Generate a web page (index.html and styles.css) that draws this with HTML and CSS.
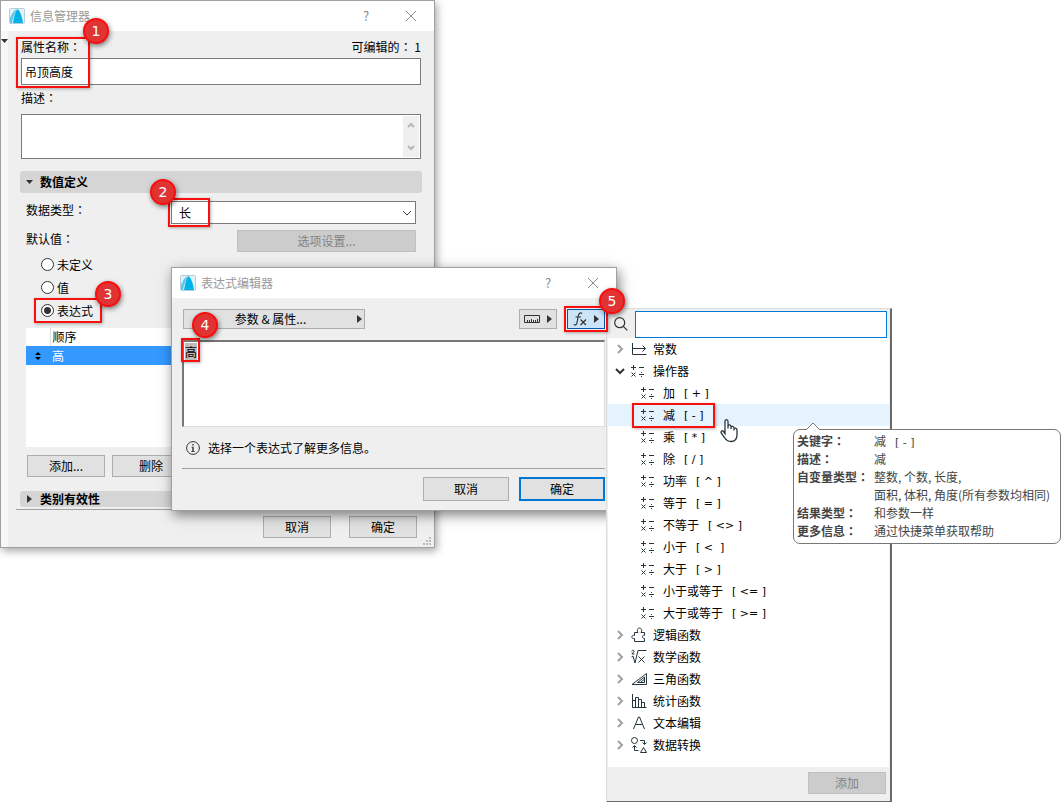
FILE: index.html
```html
<!DOCTYPE html>
<html lang="zh-CN">
<head>
    <meta charset="UTF-8">
    <meta name="viewport" content="width=device-width, initial-scale=1.0">
    <title>信息管理器</title>
    <link rel="stylesheet" href="styles.css">
</head>
<body>
    <!-- shared icons -->
    <svg class="defs" width="0" height="0" aria-hidden="true">
        <symbol id="logo" viewBox="0 0 16 16">
            <rect x="0.5" y="0.5" width="15" height="15" rx="1" fill="#e4f1f7" stroke="#b5cdd8"/>
            <path d="M1 15V10C3 5 5 2 8 1C6 5 4 9 3 15Z" fill="#5cc8ee"/>
            <path d="M4 15C5 9 6 4 8.500 1C11 3 13 8 14 15H10Z" fill="#00b2e8"/>
        </symbol>
        <symbol id="close" viewBox="0 0 12 12">
            <path d="M1 1L11 11M11 1L1 11" fill="none" stroke="#888"/>
        </symbol>
        <symbol id="ops" viewBox="0 0 14 14">
            <path d="M0 3.500H5M2.500 1V6M8 3.500H13M0.500 8.500L4.500 12.500M4.500 8.500L0.500 12.500M8 10.500H13" fill="none" stroke="#26343c"/>
            <path d="M10 8h1v1h-1zM10 12h1v1h-1z" fill="#26343c"/>
        </symbol>
        <symbol id="right" viewBox="0 0 8 10">
            <path d="M2 1L6 5L2 9" fill="none" stroke="#a0a0a0" stroke-width="2"/>
        </symbol>
        <symbol id="play" viewBox="0 0 5 8">
            <path d="M0 0L5 4L0 8Z" fill="#333"/>
        </symbol>
    </svg>

    <main class="desktop">
        <section class="window manager">
            <header class="titlebar">
                <svg class="logo"><use href="#logo"/></svg>
                <h1>信息管理器</h1>
                <button class="help" aria-label="帮助">?</button>
                <button class="close" aria-label="关闭"><svg><use href="#close"/></svg></button>
            </header>
            <div class="manager-body">
                <svg class="collapse" viewBox="0 0 7 4"><path d="M0 0H7L3.500 4Z" fill="#333"/></svg>
                <div class="label-row">
                    <label for="name">属性名称<span class="colon">：</span></label>
                    <span>可编辑的<span class="colon">：</span> 1</span>
                </div>
                <input id="name" class="name" type="text" value="吊顶高度">
                <label class="desc-label" for="desc">描述<span class="colon">：</span></label>
                <div class="desc">
                    <textarea id="desc"></textarea>
                    <div class="scroll">
                        <svg viewBox="0 0 8 6"><path d="M1 5L4 2L7 5" /></svg>
                        <svg viewBox="0 0 8 6"><path d="M1 1L4 4L7 1" /></svg>
                    </div>
                </div>

                <h2 class="section"><svg viewBox="0 0 7 4" class="down"><path d="M0 0H7L3.500 4Z" fill="#333"/></svg>数值定义</h2>
                <div class="field">
                    <label for="type">数据类型<span class="colon">：</span></label>
                    <div class="select">
                        <select id="type"><option>长</option></select>
                        <svg viewBox="0 0 10 6"><path d="M1 1L5 5L9 1" fill="none" stroke="#444"/></svg>
                    </div>
                </div>
                <div class="field default">
                    <span>默认值<span class="colon">：</span></span>
                    <button class="btn" disabled>选项设置...</button>
                </div>
                <div class="radios">
                    <label><input type="radio" name="def">未定义</label>
                    <label><input type="radio" name="def">值</label>
                    <label><input type="radio" name="def" checked>表达式</label>
                </div>
                <div class="list">
                    <table>
                        <thead>
                            <tr><th class="handle"></th><th>顺序</th></tr>
                        </thead>
                        <tbody>
                            <tr><td class="handle"><svg viewBox="0 0 6 8"><path d="M0 3L3 0L6 3ZM0 5L3 8L6 5Z"/></svg></td><td>高</td></tr>
                        </tbody>
                    </table>
                </div>
                <div class="list-buttons">
                    <button class="btn">添加...</button>
                    <button class="btn">删除</button>
                </div>
                <h2 class="section cut"><svg class="play"><use href="#play"/></svg>类别有效性</h2>
                <div class="manager-footer">
                    <button class="btn">取消</button>
                    <button class="btn">确定</button>
                    <svg class="grip" viewBox="0 0 8 8"><path d="M6 0h2v2H6zM3 3h2v2H3zM6 3h2v2H6zM0 6h2v2H0zM3 6h2v2H3zM6 6h2v2H6z" fill="#bbb"/></svg>
                </div>
            </div>
        </section>

        <section class="window editor">
            <header class="titlebar">
                <svg class="logo"><use href="#logo"/></svg>
                <h1>表达式编辑器</h1>
                <button class="help" aria-label="帮助">?</button>
                <button class="close" aria-label="关闭"><svg><use href="#close"/></svg></button>
            </header>
            <div class="editor-body">
                <div class="toolbar">
                    <button class="btn params"><span>参数 &amp; 属性...</span><svg class="play"><use href="#play"/></svg></button>
                    <button class="btn tool" aria-label="单位">
                        <svg class="ruler" viewBox="0 0 16 8"><path d="M0.500 0.500H15.500V7.500H0.500ZM3.500 5V7M5.500 5V7M7.500 4V7M9.500 5V7M11.500 5V7M13.500 4V7" fill="none" stroke="#333"/></svg>
                        <svg class="play"><use href="#play"/></svg>
                    </button>
                    <button class="btn tool active" aria-label="函数">
                        <svg class="fx" viewBox="0 0 14 14"><path d="M9 1.500C7 0 5.800 1.500 5.300 4L4 10.500C3.600 12.800 2.500 13.500 0.800 12.500M2.500 5H8M7.500 7.500L13 13M13 7.500L7.500 13" fill="none" stroke="#333" stroke-width="1.200"/></svg>
                        <svg class="play"><use href="#play"/></svg>
                    </button>
                </div>
                <textarea class="expression" aria-label="表达式">高</textarea>
                <p class="info">
                    <svg viewBox="0 0 14 14"><circle cx="7" cy="7" r="6.400" fill="none" stroke="#333"/><path d="M6.300 3h1.400v1.400H6.300zM5.500 5.700h2.200v4.500h1v0.800H5.300v-0.800h1V6.500h-0.800z" fill="#333"/></svg>
                    选择一个表达式了解更多信息。
                </p>
                <div class="editor-footer">
                    <button class="btn">取消</button>
                    <button class="btn primary">确定</button>
                </div>
            </div>
        </section>

        <section class="functions">
            <div class="search">
                <svg viewBox="0 0 14 14"><circle cx="5.700" cy="5.700" r="5" /><path d="M9.300 9.300L13.300 13.300"/></svg>
                <input type="text" aria-label="搜索">
            </div>
            <ul class="tree">
                <li><div class="node"><svg class="arrow"><use href="#right"/></svg><svg class="icon" viewBox="0 0 16 16"><path d="M1.500 2V13.500H15.500M1.500 7.500H14.500M11.500 4.500L14.500 7.500L11.500 10.500"/></svg>常数</div></li>
                <li>
                    <div class="node"><svg class="arrow open" viewBox="0 0 10 8"><path d="M1 2L5 6L9 2"/></svg><svg class="ops"><use href="#ops"/></svg>操作器</div>
                    <ul>
                        <li class="leaf"><svg class="ops"><use href="#ops"/></svg>加<span class="sign">[ + ]</span></li>
                        <li class="leaf hover"><svg class="ops"><use href="#ops"/></svg>减<span class="sign">[ - ]</span></li>
                        <li class="leaf"><svg class="ops"><use href="#ops"/></svg>乘<span class="sign">[ * ]</span></li>
                        <li class="leaf"><svg class="ops"><use href="#ops"/></svg>除<span class="sign">[ / ]</span></li>
                        <li class="leaf"><svg class="ops"><use href="#ops"/></svg>功率<span class="sign">[ ^ ]</span></li>
                        <li class="leaf"><svg class="ops"><use href="#ops"/></svg>等于<span class="sign">[ = ]</span></li>
                        <li class="leaf"><svg class="ops"><use href="#ops"/></svg>不等于<span class="sign">[ &lt;&gt; ]</span></li>
                        <li class="leaf"><svg class="ops"><use href="#ops"/></svg>小于<span class="sign">[ &lt;&nbsp; ]</span></li>
                        <li class="leaf"><svg class="ops"><use href="#ops"/></svg>大于<span class="sign">[ &gt; ]</span></li>
                        <li class="leaf"><svg class="ops"><use href="#ops"/></svg>小于或等于<span class="sign">[ &lt;= ]</span></li>
                        <li class="leaf"><svg class="ops"><use href="#ops"/></svg>大于或等于<span class="sign">[ &gt;= ]</span></li>
                    </ul>
                </li>
                <li><div class="node"><svg class="arrow"><use href="#right"/></svg><svg class="icon" viewBox="0 0 16 16"><path d="M3.500 14.500V11.500C0 12.500 0 7.500 3.500 8.500V5.500H7C5.500 3.500 6.500 1 8.500 1S11.500 3.500 10 5.500H13.500V8.500C11 7.500 10.500 11.500 13.500 11.500V14.500Z"/></svg>逻辑函数</div></li>
                <li><div class="node"><svg class="arrow"><use href="#right"/></svg><svg class="icon" viewBox="0 0 16 16"><path d="M0.500 8L2 7L4 14L7 1.500H15.500M7.500 7.500L13.500 13.500M13.500 7.500L7.500 13.500M0.800 2.500C1 0.500 3.500 1 3 2.800L0.800 5H3.500"/></svg>数学函数</div></li>
                <li><div class="node"><svg class="arrow"><use href="#right"/></svg><svg class="icon" viewBox="0 0 16 16"><path d="M1 13.500L15.500 2.500V13.500ZM6.500 11.500L13.500 6V11.500Z M10 11L13 8.500"/></svg>三角函数</div></li>
                <li><div class="node"><svg class="arrow"><use href="#right"/></svg><svg class="icon" viewBox="0 0 16 16"><path d="M1.500 1V14.500H15.500M4.500 14V4.500H7.500V14M7.500 6.500H10.500V14M10.500 9.500H13.500V14M1.500 7.500H4.500"/></svg>统计函数</div></li>
                <li><div class="node"><svg class="arrow"><use href="#right"/></svg><svg class="icon" viewBox="0 0 16 16"><path d="M2.500 14L7.500 2H8.500L13.500 14M4.500 9.500H11.500"/></svg>文本编辑</div></li>
                <li><div class="node"><svg class="arrow"><use href="#right"/></svg><svg class="icon" viewBox="0 0 16 16"><circle cx="3.500" cy="3.500" r="3"/><path d="M9 3.500H13.500V7.500M11.500 5.500L13.500 7.500L15.500 5.500M7.500 13.500H3.500V9M1.500 10.500L3.500 8.500L5.500 10.500M12.500 10.500L15.500 15.500H9.500Z"/></svg>数据转换</div></li>
            </ul>
            <div class="functions-footer">
                <button class="btn" disabled>添加</button>
            </div>
        </section>

        <div class="tooltip" role="tooltip">
            <svg class="tail" viewBox="0 0 14 8"><path d="M0 8L7 1L14 8" fill="#fff" stroke="#777"/></svg>
            <dl>
                <dt>关键字<span class="colon">：</span></dt><dd>减<span class="sign">[ - ]</span></dd>
                <dt>描述<span class="colon">：</span></dt><dd>减</dd>
                <dt>自变量类型<span class="colon">：</span></dt><dd>整数, 个数, 长度,<br>面积, 体积, 角度(所有参数均相同)</dd>
                <dt>结果类型<span class="colon">：</span></dt><dd>和参数一样</dd>
                <dt>更多信息<span class="colon">：</span></dt><dd>通过快捷菜单获取帮助</dd>
            </dl>
        </div>
        <svg class="cursor" viewBox="0 0 18 24"><path d="M5 15V3C5 0.500 8 0.500 8 3V10V7.500C8 6 11 6 11 8V10.500V9C11 7.500 14 7.500 14 9.500V12V10.500C14 9 17 9.500 17 11.500V16C17 20 15 23 11 23C7.500 23 6 21.500 4.500 19L1.200 14.500C0.500 12.500 2.500 11.500 3.500 13Z" fill="#fff" stroke="#26343c" stroke-width="1.300"/></svg>

        <!-- step marks -->
        <div class="frame frame-name"></div>
        <div class="frame frame-type"></div>
        <div class="frame frame-radio"></div>
        <div class="frame frame-expression"></div>
        <div class="frame frame-fx"></div>
        <div class="frame frame-minus"></div>
        <span class="badge badge-1">1</span>
        <span class="badge badge-2">2</span>
        <span class="badge badge-3">3</span>
        <span class="badge badge-4">4</span>
        <span class="badge badge-5">5</span>
    </main>
</body>
</html>
```
FILE: styles.css
```css
* {
    box-sizing: border-box;
}
body {
    margin: 0;
    background: #fff;
    color: #000;
    font-family: "Noto Sans CJK SC", sans-serif;
    font-size: 12px;
    line-height: 18px;
}
input, select, textarea, button {
    font: inherit;
    color: inherit;
    border-radius: 0;
    outline: none;
}
h1, h2, p, ul, dl, dd {
    margin: 0;
    padding: 0;
}
ul {
    list-style: none;
}
svg {
    display: block;
    flex: none;
}
.defs {
    position: absolute;
}
.desktop {
    position: relative;
    min-height: 100vh;
}
/* centred full-width colon */
.colon {
    font-family: "Noto Sans CJK TC", sans-serif;
    font-feature-settings: "locl" 0;
}

/* windows */
.window {
    position: absolute;
    background: #efefef;
    border: 1px solid #a0a0a0;
    box-shadow: 2px 3px 8px rgba(0, 0, 0, 0.35);
}
.manager {
    left: 0;
    top: 0;
    width: 435px;
}
.editor {
    left: 171px;
    top: 267px;
    width: 446px;
    box-shadow: 2px 4px 12px rgba(0, 0, 0, 0.5);
}
.titlebar {
    display: flex;
    align-items: center;
    height: 30px;
    padding: 0 17px 0 8px;
    background: #fff;
}
.titlebar h1 {
    flex: 1;
    margin-left: 5px;
    font-size: 12px;
    font-weight: normal;
    color: #999;
}
.titlebar button {
    padding: 0;
    border: 0;
    background: none;
    color: #888;
}
.logo {
    width: 16px;
    height: 16px;
}
.help {
    width: 12px;
    margin-right: 33px;
    font-size: 13px;
}
.close svg {
    width: 12px;
    height: 12px;
}
.btn {
    display: flex;
    align-items: center;
    justify-content: center;
    height: 22px;
    padding: 0 0 1px;
    background: #e1e1e1;
    border: 1px solid #adadad;
}
.btn:disabled {
    background: #ccc;
    border-color: #bfbfbf;
    color: #838383;
}
.play {
    width: 5px;
    height: 8px;
}

/* property manager */
.manager-body {
    padding: 7px 13px 0 20px;
    background: linear-gradient(to right, #f7f7f7 7px, #efefef 7px);
    position: relative;
}
.collapse {
    position: absolute;
    left: 0;
    top: 8px;
    width: 7px;
    height: 4px;
}
.label-row {
    display: flex;
    justify-content: space-between;
    height: 20px;
}
.name {
    display: block;
    width: 100%;
    height: 27px;
    padding: 0 3px;
    border: 1px solid #7a7a7a;
    background: #fff;
}
.desc-label {
    display: block;
    padding: 4px 0 7px;
}
.desc {
    display: flex;
    height: 45px;
    padding: 1px;
    border: 1px solid #7a7a7a;
    background: #fff;
}
.desc textarea {
    flex: 1;
    border: 0;
    resize: none;
}
.scroll {
    display: flex;
    flex-direction: column;
    justify-content: space-between;
    align-items: center;
    width: 16px;
    padding: 6px 0;
    background: #efefef;
}
.scroll svg {
    width: 8px;
    height: 6px;
    fill: none;
    stroke: #b5b5b5;
    stroke-width: 2;
}
.section {
    display: flex;
    align-items: center;
    height: 22px;
    margin: 12px -1px 8px;
    padding-left: 6px;
    background: #d5d5d5;
    border-radius: 3px;
    font-size: 12px;
    font-weight: bold;
}
.section .down {
    width: 7px;
    height: 4px;
    margin-right: 7px;
}
.section .play {
    margin: 0 8px 0 1px;
}
.field {
    display: flex;
    justify-content: space-between;
    padding: 0 5px;
}
.select {
    position: relative;
    width: 245px;
    height: 23px;
}
.select select {
    width: 100%;
    height: 100%;
    padding: 0 7px;
    border: 1px solid #7a7a7a;
    background: #fff;
    appearance: none;
}
.select svg {
    position: absolute;
    right: 4px;
    top: 9px;
    width: 10px;
    height: 6px;
}
.default {
    margin-top: 6px;
}
.default .btn {
    width: 179px;
}
.radios {
    padding-left: 20px;
    margin: 1px 0 6px;
}
.radios label {
    display: flex;
    align-items: center;
    gap: 3px;
    height: 23px;
}
.radios input {
    appearance: none;
    width: 13px;
    height: 13px;
    margin: 0;
    border: 1px solid #333;
    border-radius: 50%;
    background: #fff;
}
.radios input:checked {
    background: radial-gradient(circle, #333 3px, #fff 4px);
}
.list {
    height: 119px;
    margin: 0 5px;
    background: #fff;
}
.list table {
    width: 100%;
    border-collapse: collapse;
}
.list th, .list td {
    height: 18px;
    padding: 0 2px;
    line-height: 18px;
    font-weight: normal;
    text-align: left;
}
.list td {
    height: 19px;
}
.list .handle {
    width: 24px;
}
.list th.handle {
    border-right: 1px solid #ddd;
}
.list .handle svg {
    width: 6px;
    height: 8px;
    margin: auto;
}
.list tbody {
    background: #3399ff;
    color: #fff;
}
.list-buttons {
    display: flex;
    gap: 7px;
    margin: 8px 6px 14px;
}
.list-buttons .btn {
    width: 78px;
}
.section.cut {
    height: 16px;
    margin: 0 -1px 2px;
}
.manager-footer {
    position: relative;
    display: flex;
    justify-content: flex-end;
    gap: 18px;
    margin: 0 0 0 -5px;
    padding: 6px 4px 9px;
    border-top: 1px solid #a0a0a0;
}
.manager-footer .btn {
    width: 68px;
}
.grip {
    position: absolute;
    right: -10px;
    bottom: 2px;
    width: 8px;
    height: 8px;
}

/* expression editor */
.editor-body {
    padding: 11px 11px 9px 10px;
}
.toolbar {
    display: flex;
    gap: 10px;
    margin-left: 1px;
}
.toolbar .btn {
    height: 20px;
}
.params {
    width: 182px;
    margin-right: auto;
    padding-right: 2px;
}
.params span {
    flex: 1;
}
.tool {
    width: 38px;
    gap: 7px;
}
.tool.active {
    background: #cce4f7;
    border-color: #0058a8;
}
.ruler {
    width: 16px;
    height: 8px;
}
.fx {
    width: 14px;
    height: 14px;
}
.expression {
    display: block;
    width: 100%;
    height: 87px;
    margin-top: 11px;
    padding: 1px;
    border: 1px solid #ddd;
    border-top: 2px solid #777;
    border-left: 2px solid #777;
    background: linear-gradient(#bbb, #bbb) no-repeat 1px 1px / 12px 17px #fff;
    resize: none;
}
.info {
    display: flex;
    align-items: center;
    gap: 8px;
    height: 41px;
    padding-left: 4px;
}
.info svg {
    width: 14px;
    height: 14px;
}
.editor-footer {
    display: flex;
    justify-content: flex-end;
    gap: 10px;
    padding-top: 8px;
    border-top: 1px solid #a0a0a0;
}
.editor-footer .btn {
    width: 86px;
    height: 24px;
}
.editor-footer .primary {
    border: 2px solid #0078d7;
}

/* function list */
.functions {
    position: absolute;
    left: 606px;
    top: 308px;
    width: 286px;
    padding: 1px;
    background: #efefef;
    border: 1px solid #ddd;
    border-right: 2px solid #696969;
    border-bottom: 2px solid #696969;
}
.search {
    display: flex;
    align-items: center;
    gap: 7px;
    height: 28px;
    padding: 0 2px 0 6px;
}
.search svg {
    width: 14px;
    height: 14px;
    fill: none;
    stroke: #333;
    stroke-width: 1.2;
}
.search input {
    flex: 1;
    min-width: 0;
    height: 27px;
    border: 1px solid #0078d7;
    background: #fff;
}
.tree {
    padding-bottom: 11px;
    background: #fff;
}
.node, .leaf {
    display: flex;
    align-items: center;
    height: 22px;
}
.node {
    padding-left: 7px;
}
.leaf {
    padding-left: 33px;
}
.leaf.hover {
    background: #e5f3ff;
}
.arrow {
    width: 10px;
    height: 10px;
    margin-right: 6px;
}
.arrow.open {
    height: 8px;
    fill: none;
    stroke: #333;
    stroke-width: 2;
}
.icon {
    width: 16px;
    height: 16px;
    margin-right: 6px;
    fill: none;
    stroke: #26343c;
}
.ops {
    width: 14px;
    height: 14px;
    margin-right: 8px;
}
.sign {
    margin-left: 9px;
    font-family: "DejaVu Sans", sans-serif;
    font-size: 11px;
    line-height: 1;
}
.functions-footer {
    display: flex;
    justify-content: flex-end;
    padding: 5px 3px 6px;
}
.functions-footer .btn {
    width: 78px;
}

/* tooltip */
.tooltip {
    position: absolute;
    left: 793px;
    top: 429px;
    width: 268px;
    padding: 2px 3px 3px;
    background: #fff;
    border: 1px solid #777;
    border-radius: 7px;
    color: #444;
}
.tooltip dl {
    display: grid;
    grid-template-columns: 77px 1fr;
}
.tooltip dt {
    font-weight: bold;
    white-space: nowrap;
}
.tooltip dd {
    white-space: nowrap;
}
.tail {
    position: absolute;
    left: 12px;
    top: -8px;
    width: 14px;
    height: 8px;
}
.cursor {
    position: absolute;
    left: 720px;
    top: 418px;
    width: 18px;
    height: 25px;
}

/* step marks */
.frame {
    position: absolute;
    border: 2px solid #f8100f;
    box-shadow: 1px 1px 3px rgba(0, 0, 0, 0.3);
    pointer-events: none;
}
.frame-name {
    left: 16px;
    top: 37px;
    width: 74px;
    height: 51px;
}
.frame-type {
    left: 168px;
    top: 198px;
    width: 42px;
    height: 29px;
}
.frame-radio {
    left: 34px;
    top: 298px;
    width: 68px;
    height: 25px;
}
.frame-expression {
    left: 181px;
    top: 338px;
    width: 19px;
    height: 24px;
}
.frame-fx {
    left: 564px;
    top: 306px;
    width: 44px;
    height: 26px;
}
.frame-minus {
    left: 632px;
    top: 403px;
    width: 83px;
    height: 25px;
}
.badge {
    position: absolute;
    width: 26px;
    height: 26px;
    border: 2px solid #fb0d0d;
    border-radius: 50%;
    background: #e03434;
    box-shadow: 1px 2px 5px rgba(0, 0, 0, 0.5);
    color: #fff;
    font-family: "DejaVu Sans", sans-serif;
    font-size: 14px;
    line-height: 22px;
    text-align: center;
}
.badge-1 {
    left: 83px;
    top: 18px;
}
.badge-2 {
    left: 150px;
    top: 179px;
}
.badge-3 {
    left: 95px;
    top: 281px;
}
.badge-4 {
    left: 192px;
    top: 312px;
}
.badge-5 {
    left: 599px;
    top: 288px;
}
```
